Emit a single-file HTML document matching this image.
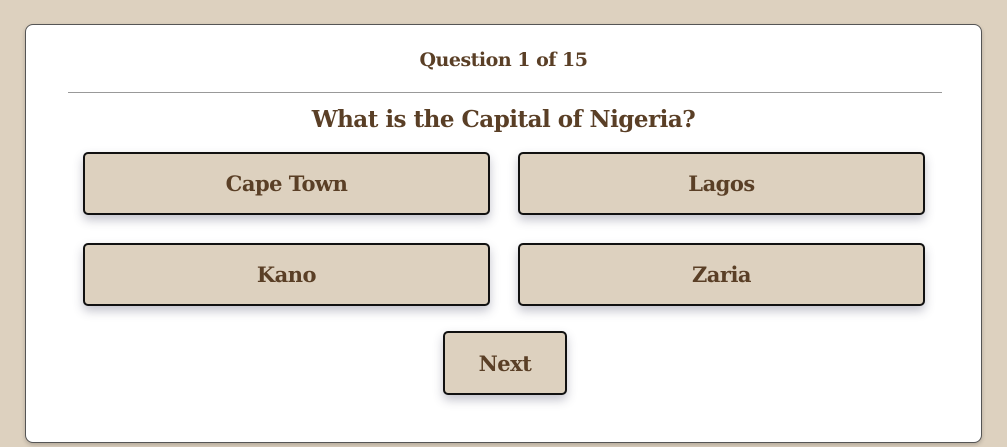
<!DOCTYPE html>
<html><head><style>
body{margin:0;width:1007px;height:447px;background:#ddd1bf;font-family:"DejaVu Serif","Liberation Serif",serif;color:#5a3f26;overflow:hidden;position:relative}
.card{position:absolute;left:25px;top:24px;width:955px;height:417px;background:#fff;border:1px solid #555;border-radius:8px;box-shadow:0 2px 4px rgba(0,0,0,.2)}
.t{position:absolute;left:0;right:0;text-align:center;font-weight:bold}
.hr{position:absolute;left:42px;top:67px;width:874px;height:1px;background:#999}
.b{position:absolute;box-sizing:border-box;border:2px solid #111;border-radius:5px;background:#ddd1bf;box-shadow:0 5px 10px rgba(60,60,90,.3);display:flex;align-items:center;justify-content:center;font-size:21px;font-weight:bold;letter-spacing:-0.5px}
</style></head><body>
<div class="card">
<div class="t" style="top:24px;font-size:19px;letter-spacing:-0.5px">Question 1 of 15</div>
<div class="hr"></div>
<div class="t" style="top:81px;font-size:23px;letter-spacing:-0.5px">What is the Capital of Nigeria?</div>
<div class="b" style="left:57px;top:127px;width:407px;height:63px">Cape Town</div>
<div class="b" style="left:492px;top:127px;width:407px;height:63px">Lagos</div>
<div class="b" style="left:57px;top:218px;width:407px;height:63px">Kano</div>
<div class="b" style="left:492px;top:218px;width:407px;height:63px">Zaria</div>
<div class="b" style="left:417px;top:306px;width:124px;height:64px">Next</div>
</div>
</body></html>
